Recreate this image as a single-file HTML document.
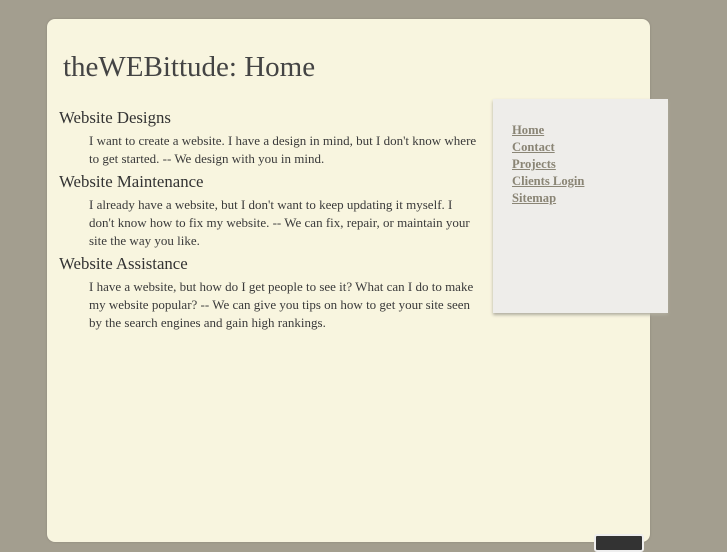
<!DOCTYPE html>
<html><head><style>
html,body{margin:0;padding:0;width:727px;height:545px;overflow:hidden;background:#a39e8f;font-family:"Liberation Serif",serif;}
.main{position:absolute;left:47px;top:19px;width:603px;height:523px;background:#f8f5df;border-radius:8px;box-shadow:0 0 2px #8a8577;}
h1{position:absolute;left:63px;top:50px;margin:0;font-weight:normal;font-size:29px;color:#444;line-height:34px;}
.content{position:absolute;left:59px;top:106px;width:422px;color:#333;}
h2{margin:0 0 2px 0;font-weight:normal;font-size:16.8px;line-height:24px;color:#333;}
p{margin:0 0 2px 0;padding-left:30px;font-size:13px;line-height:18px;color:#3a3a3a;}
.side{position:absolute;left:493px;top:99px;width:175px;height:214px;background:#eeedea;box-shadow:0 2px 3px #b0ad9f;}
.side a{display:block;position:absolute;left:19px;font-size:12.6px;font-weight:bold;color:#8a8575;text-decoration:underline;}
.btn{position:absolute;left:594px;top:534px;width:46px;height:14px;background:#333;border:2px solid #eee;border-radius:3px;}
</style></head><body>
<div class="main"></div>
<h1>theWEBittude: Home</h1>
<div class="content">
<h2>Website Designs</h2>
<p>I want to create a website. I have a design in mind, but I don't know where to get started. -- We design with you in mind.</p>
<h2>Website Maintenance</h2>
<p>I already have a website, but I don't want to keep updating it myself. I don't know how to fix my website. -- We can fix, repair, or maintain your site the way you like.</p>
<h2>Website Assistance</h2>
<p>I have a website, but how do I get people to see it? What can I do to make my website popular? -- We can give you tips on how to get your site seen by the search engines and gain high rankings.</p>
</div>
<div class="side">
<a style="top:24px">Home</a>
<a style="top:41px">Contact</a>
<a style="top:58px">Projects</a>
<a style="top:75px">Clients Login</a>
<a style="top:92px">Sitemap</a>
</div>
<div class="btn"></div>
</body></html>
